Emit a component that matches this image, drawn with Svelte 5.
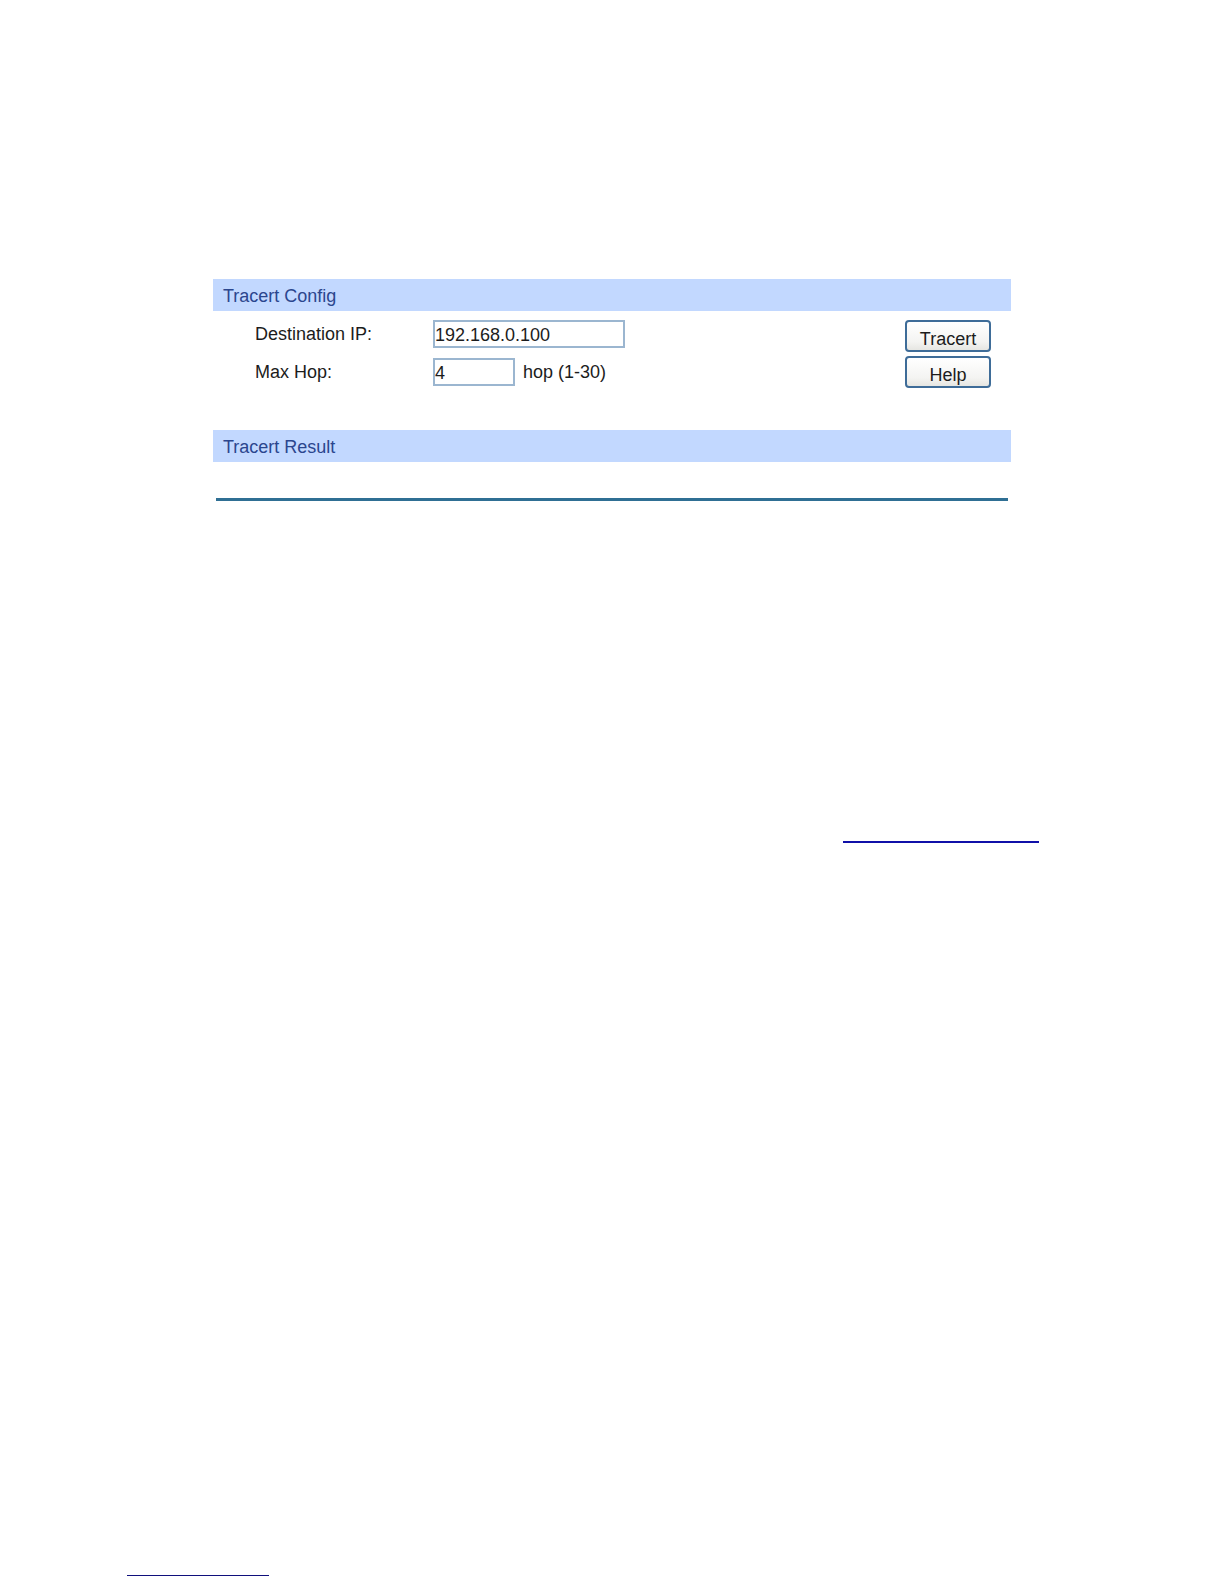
<script>
	let destination = $state("192.168.0.100");
	let maxHop = $state("4");
</script>

<main>
	<form class="panel" onsubmit={(e) => e.preventDefault()}>
		<h2>Tracert Config</h2>
		<div class="config">
			<div class="fields">
				<div class="row">
					<label for="destination">Destination IP:</label>
					<input id="destination" type="text" bind:value={destination} />
				</div>
				<div class="row">
					<label for="max-hop">Max Hop:</label>
					<input id="max-hop" class="short" type="text" bind:value={maxHop} />
					<span>hop (1-30)</span>
				</div>
			</div>
			<div class="buttons">
				<button type="submit">Tracert</button>
				<button type="button">Help</button>
			</div>
		</div>
		<h2>Tracert Result</h2>
		<hr />
	</form>

	<div class="links">
		<a class="wide" href="#result"></a>
		<a class="narrow" href="#config"></a>
	</div>
</main>

<style>
	:global(body) {
		background: #fff;
	}
	main {
		box-sizing: border-box;
		min-height: 100vh;
		padding: 279px 0 8px;
		display: flex;
		flex-direction: column;
		font-family: "Liberation Sans", Arial, sans-serif;
		font-size: 18px;
		line-height: 28px;
		color: #1c1c1c;
	}
	.panel {
		width: 65.2%;
		margin: 0 auto;
	}
	h2 {
		margin: 0;
		padding: 2px 10px 0;
		background: #c2d8ff;
		color: #2b468e;
		font-size: 18px;
		font-weight: normal;
		line-height: 30px;
	}
	.config {
		display: flex;
		justify-content: space-between;
		padding: 9px 20px 42px 42px;
	}
	.fields {
		display: flex;
		flex-direction: column;
		gap: 10px;
	}
	.row {
		display: flex;
	}
	label {
		width: 178px;
	}
	input {
		box-sizing: border-box;
		width: 192px;
		height: 28px;
		padding: 1px 0 0;
		border: 2px solid #9bb6d0;
		border-radius: 0;
		background: #fff;
		color: inherit;
		font: inherit;
	}
	input.short {
		width: 82px;
		margin-right: 8px;
	}
	.buttons {
		display: flex;
		flex-direction: column;
		gap: 4px;
	}
	button {
		box-sizing: border-box;
		width: 86px;
		height: 32px;
		padding: 6px 0 0;
		border: 2px solid #3e6c98;
		border-radius: 4px;
		background: linear-gradient(#fff, #f4f4f2 70%, #e6e6e2);
		color: inherit;
		font: inherit;
		line-height: 22px;
	}
	hr {
		height: 3px;
		margin: 36px 3px 0;
		border: 0;
		background: #2f6f94;
	}
	.links {
		flex: 1;
		display: flex;
		flex-direction: column;
		justify-content: space-between;
		padding: 340px 185px 0 127px;
	}
	.links a {
		display: block;
	}
	.wide {
		align-self: flex-end;
		width: 196px;
		border-bottom: 2px solid #1010a8;
	}
	.narrow {
		width: 142px;
		border-bottom: 1px solid #10107c;
	}
</style>
